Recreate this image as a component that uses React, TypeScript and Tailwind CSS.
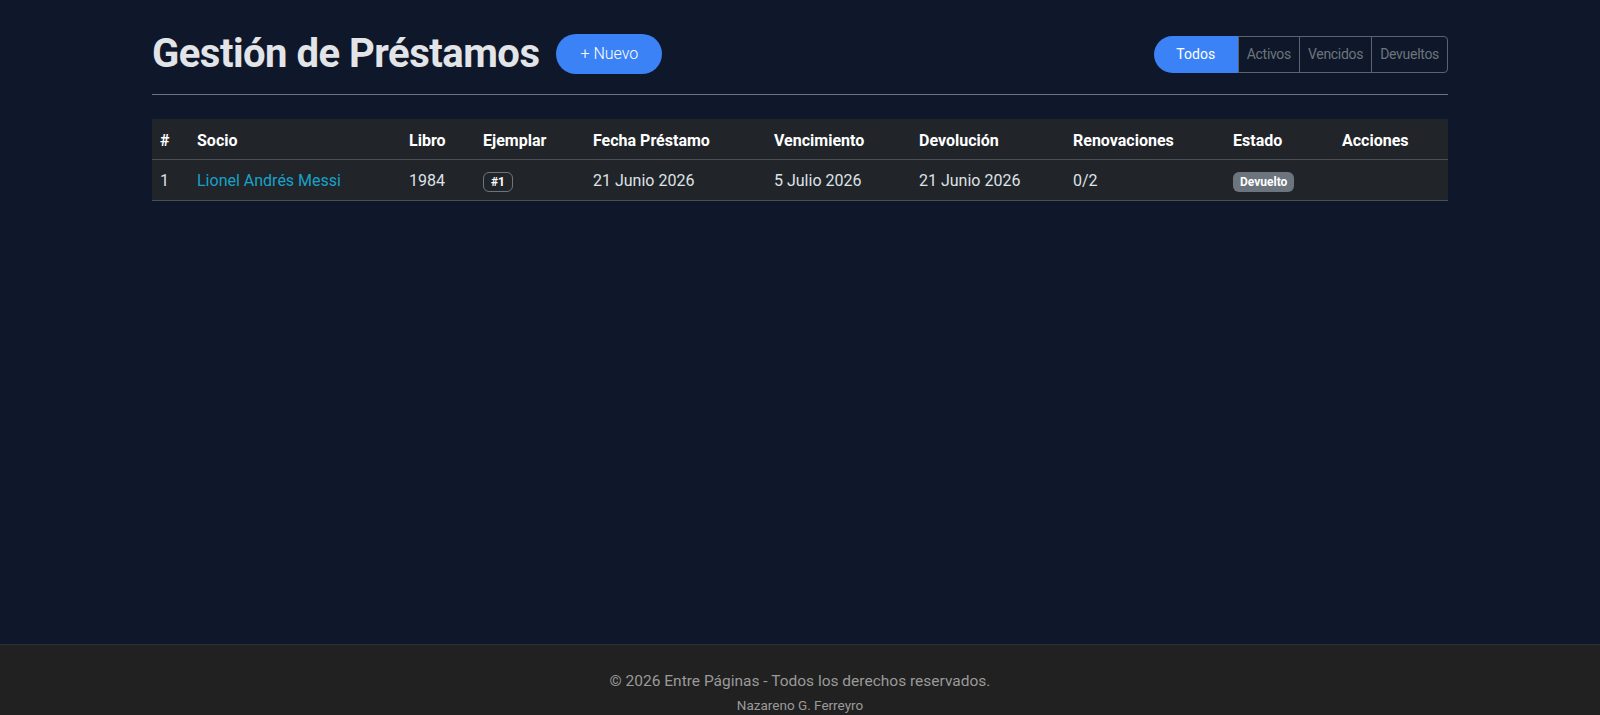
import React from 'react';

const columns = [
    { label: '#', w: 'w-[37px]' },
    { label: 'Socio', w: 'w-[212px]' },
    { label: 'Libro', w: 'w-[74px]' },
    { label: 'Ejemplar', w: 'w-[110px]' },
    { label: 'Fecha Préstamo', w: 'w-[181px]' },
    { label: 'Vencimiento', w: 'w-[145px]' },
    { label: 'Devolución', w: 'w-[154px]' },
    { label: 'Renovaciones', w: 'w-[160px]' },
    { label: 'Estado', w: 'w-[109px]' },
    { label: 'Acciones', w: 'w-[114px]' },
];

const filters = ['Todos', 'Activos', 'Vencidos', 'Devueltos'];

export default function App() {
    return (
        <div className="bg-[#0f172a] font-['Roboto',sans-serif] text-[#dee2e6]">
            <main className="min-h-[644px]">
                <div className="w-[1320px] mx-auto px-3 pt-[30px]">
                    {/* Title + actions */}
                    <div className="flex justify-between items-center h-12">
                        <div className="flex items-center gap-[17px]">
                            <h1 className="text-[40px] leading-[48px] font-bold text-[#e2e4e8] tracking-[-0.5px]">Gestión de Préstamos</h1>
                            <button className="h-[40px] px-6 rounded-full bg-[#3b82f6] text-white text-base font-light">+ Nuevo</button>
                        </div>
                        <div className="flex h-[37px] text-sm">
                            {filters.map((f, i) =>
                                i === 0 ? (
                                    <button key={f} className="w-[84px] rounded-l-full bg-[#3b82f6] text-white">{f}</button>
                                ) : (
                                    <button
                                        key={f}
                                        className={`px-2 border border-[#5c636a] text-[#6c757d] tracking-[-0.3px] ${i > 1 ? '-ml-px' : ''} ${i === 3 ? 'rounded-r' : ''}`}
                                    >
                                        {f}
                                    </button>
                                )
                            )}
                        </div>
                    </div>

                    <hr className="mt-4 border-t border-[#6b7280]" />

                    {/* Loans table */}
                    <table className="mt-6 w-full table-fixed bg-[#212529] text-base">
                        <thead>
                            <tr className="h-10 border-b border-[#4b5057]">
                                {columns.map(c => (
                                    <th key={c.label} className={`${c.w} px-2 pt-1 text-left font-bold text-white`}>{c.label}</th>
                                ))}
                            </tr>
                        </thead>
                        <tbody>
                            <tr className="h-[41px] border-b border-[#4b5057] [&>td]:pt-[3px]">
                                <td className="px-2">1</td>
                                <td className="px-2"><a href="#" className="text-[#17a2c8]">Lionel Andrés Messi</a></td>
                                <td className="px-2">1984</td>
                                <td className="px-2">
                                    <span className="inline-block px-[7px] py-[1px] rounded-md border border-[#6c757d] text-xs font-bold text-white">#1</span>
                                </td>
                                <td className="px-2">21 Junio 2026</td>
                                <td className="px-2">5 Julio 2026</td>
                                <td className="px-2">21 Junio 2026</td>
                                <td className="px-2">0/2</td>
                                <td className="px-2">
                                    <span className="inline-block px-[7px] py-[2px] rounded-md bg-[#6c757d] text-xs font-bold text-white">Devuelto</span>
                                </td>
                                <td className="px-2"></td>
                            </tr>
                        </tbody>
                    </table>
                </div>
            </main>

            <footer className="bg-[#212121] border-t border-[#2f2f2f] pt-6 pb-6 text-center text-[#9a9a9a]">
                <p className="text-[15.5px] leading-6">© 2026 Entre Páginas - Todos los derechos reservados.</p>
                <p className="text-[13.5px] leading-5 mt-0.5">Nazareno G. Ferreyro</p>
            </footer>
        </div>
    );
}
